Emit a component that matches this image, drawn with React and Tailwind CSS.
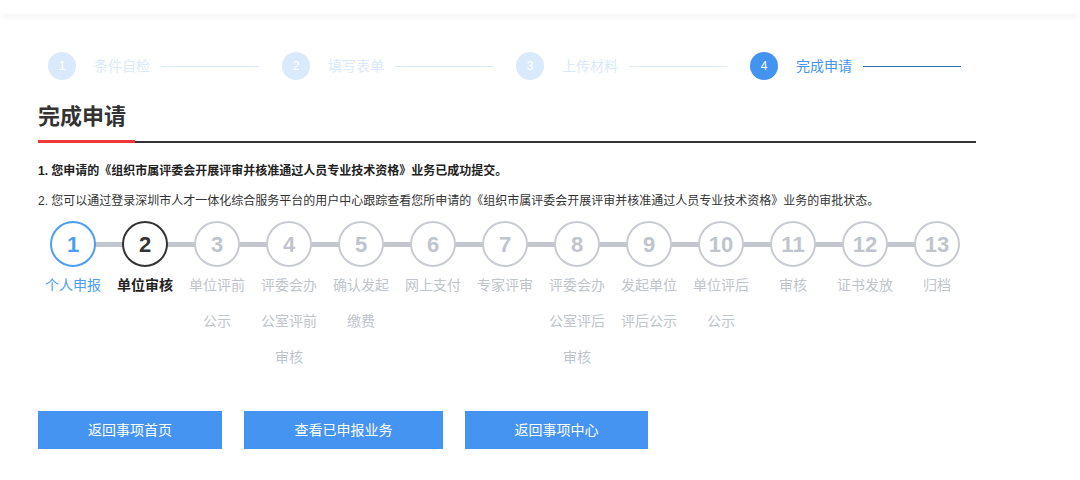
const top = ["条件自检", "填写表单", "上传材料", "完成申请"];
const steps = [
  ["个人申报"], ["单位审核"], ["单位评前", "公示"], ["评委会办", "公室评前", "审核"], ["确认发起", "缴费"],
  ["网上支付"], ["专家评审"], ["评委会办", "公室评后", "审核"], ["发起单位", "评后公示"], ["单位评后", "公示"],
  ["审核"], ["证书发放"], ["归档"],
];

export default function App() {
  return (
    <div className="w-[1080px] h-[480px] bg-white overflow-hidden" style={{ fontFamily: '"Liberation Sans","Noto Sans CJK SC",sans-serif' }}>
      <div className="h-[14px] bg-white shadow-[0_2px_8px_rgba(0,0,0,0.06)]" />
      <div className="pl-[38px] w-[1010px]">
        <div className="flex items-center h-[28px] mt-[38px] pl-[10px]">
          {top.map((t, i) => {
            const on = i === 3;
            return (
              <div key={t} className="flex items-center w-[234px] shrink-0">
                <div className={`w-[28px] h-[28px] shrink-0 rounded-full flex items-center justify-center text-[12px] text-white ${on ? "bg-[#4394f0]" : "bg-[#d9eafc]"}`}>{i + 1}</div>
                <span className={`ml-[18px] w-[56px] shrink-0 text-[14px] whitespace-nowrap ${on ? "text-[#4394f0]" : "text-[#d9eafc]"}`}>{t}</span>
                <div className={`ml-[11px] w-[98px] shrink-0 h-px ${on ? "bg-[#2f6fb8]" : "bg-[#d9eafc]"}`} />
              </div>
            );
          })}
        </div>
        <div className="w-[938px]">
          <h1 className="mt-[22px] text-[22px] font-bold text-[#333] leading-[30px]">完成申请</h1>
          <div className="mt-[8px] flex items-end">
            <div className="w-[97px] h-[3px] bg-[#f0383a]" />
            <div className="flex-1 h-[2px] bg-[#333]" />
          </div>
        </div>
        <p className="mt-[18px] text-[12px] font-bold text-[#222] leading-[20px]">1. 您申请的《组织市属评委会开展评审并核准通过人员专业技术资格》业务已成功提交。</p>
        <p className="mt-[10px] text-[12px] text-[#333] leading-[20px]">2. 您可以通过登录深圳市人才一体化综合服务平台的用户中心跟踪查看您所申请的《组织市属评委会开展评审并核准通过人员专业技术资格》业务的审批状态。</p>
        <div className="flex mt-[10px] -ml-[1px]">
          {steps.map((s, i) => {
            const c = i === 0 ? "border-[#4a9ef5] text-[#4a9ef5]" : i === 1 ? "border-[#333] text-[#333]" : "border-[#c8cbd2] text-[#c0c4cc]";
            const tc = i === 0 ? "text-[#4a9ef5]" : i === 1 ? "text-[#222] font-bold" : "text-[#c0c4cc]";
            return (
              <div key={i} className="w-[72px] flex flex-col items-center relative">
                {i < 12 && <div className="absolute top-[21px] left-[36px] w-[72px] h-[5px] bg-[#c3c6cd]" />}
                <div className={`relative z-10 w-[46px] h-[46px] rounded-full border-2 bg-white flex items-center justify-center text-[22px] font-bold ${c}`}>{i + 1}</div>
                <div className={`mt-[0px] text-[14px] leading-[36px] text-center ${tc}`}>
                  {s.map((l) => <div key={l}>{l}</div>)}
                </div>
              </div>
            );
          })}
        </div>
        <div className="absolute top-[411px] left-[38px] flex gap-[22px]">
          {[["返回事项首页", "w-[184px]"], ["查看已申报业务", "w-[199px]"], ["返回事项中心", "w-[183px]"]].map(([t, w]) => (
            <button key={t} className={`${w} h-[38px] bg-[#4694f2] text-white text-[14px]`}>{t}</button>
          ))}
        </div>
      </div>
    </div>
  );
}
